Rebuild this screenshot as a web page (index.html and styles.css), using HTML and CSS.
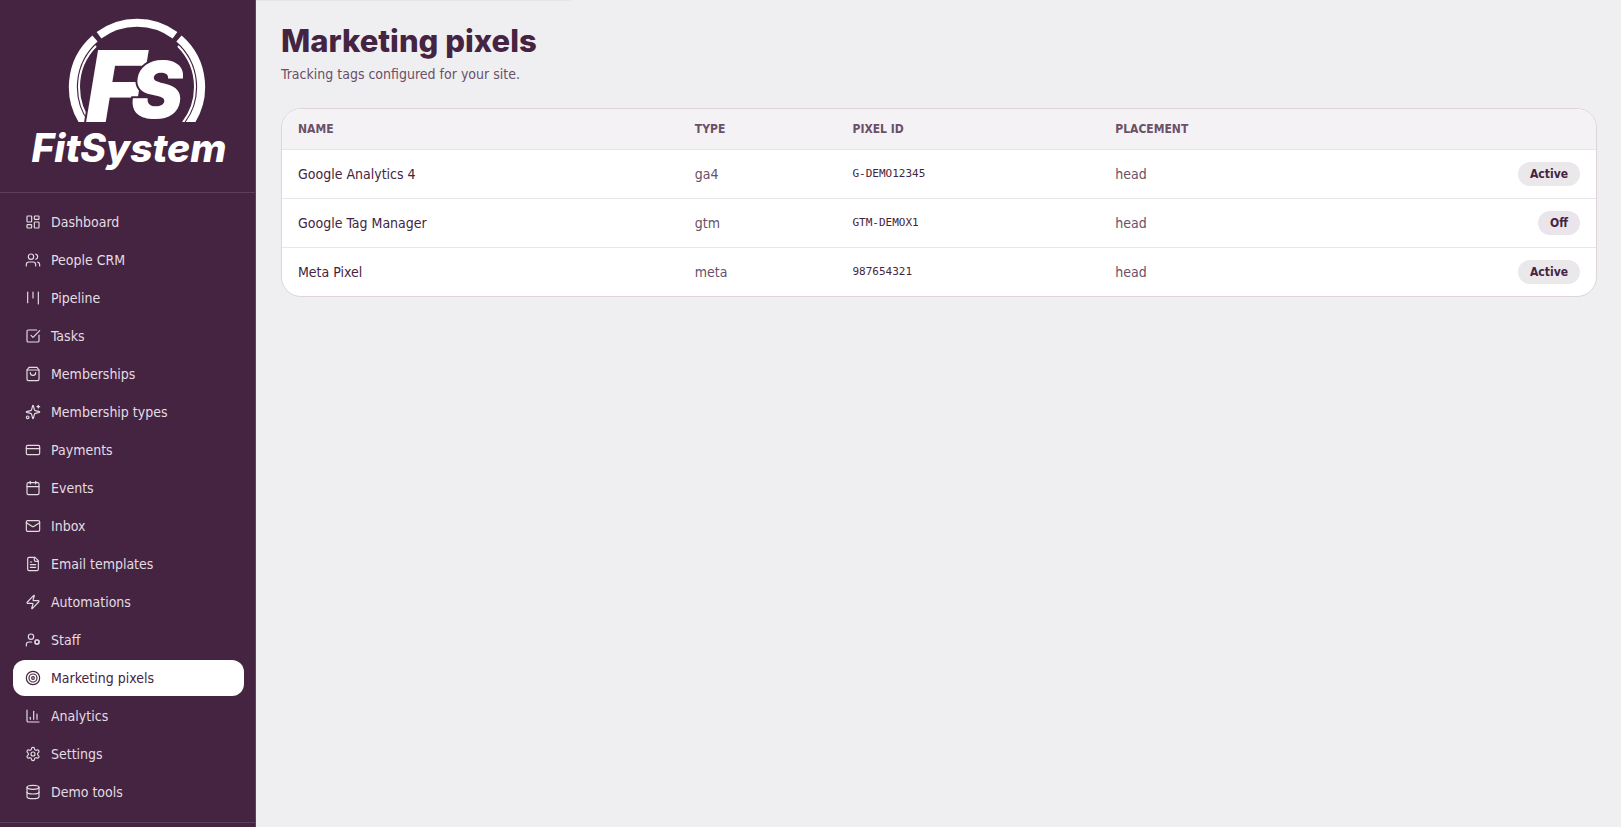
FILE: index.html
```html
<!DOCTYPE html>
<html lang="en">
<head>
    <meta charset="UTF-8">
    <meta name="viewport" content="width=device-width, initial-scale=1.0">
    <title>Marketing pixels - FitSystem</title>
    <link rel="stylesheet" href="styles.css">
</head>
<body>
    <aside class="sidebar">
        <a href="#" class="brand">
            <svg class="logo" viewBox="0 0 200 160" role="img" aria-label="FitSystem">
                <clipPath id="ringClip"><rect x="-70" y="-70" width="140" height="105"/></clipPath>
                <g transform="translate(109 71)">
                    <g class="ring" clip-path="url(#ringClip)">
                        <path d="M-38 -51.8A64 64 0 0 1 38 -51.8"/>
                        <path d="M-42 -48.5A64 64 0 0 0 -50 40"/>
                        <path d="M42 -48.5A64 64 0 0 1 50 40"/>
                        <path class="ring-thin" d="M-41 -41A58 58 0 0 0 -42 40"/>
                        <path class="ring-thin" d="M41 -41A58 58 0 0 1 42 40"/>
                    </g>
                </g>
                <text class="mark" x="58" y="106">F<tspan class="mark-small" x="103" y="102">S</tspan></text>
                <text class="wordmark" x="101" y="146" text-anchor="middle">FitSystem</text>
            </svg>
        </a>
        <nav class="nav">
            <a href="#"><svg class="icon" viewBox="0 0 24 24"><rect x="3" y="3" width="7" height="9" rx="1"/><rect x="14" y="3" width="7" height="5" rx="1"/><rect x="14" y="12" width="7" height="9" rx="1"/><rect x="3" y="16" width="7" height="5" rx="1"/></svg>Dashboard</a>
            <a href="#"><svg class="icon" viewBox="0 0 24 24"><path d="M16 21v-2a4 4 0 0 0-4-4H6a4 4 0 0 0-4 4v2"/><circle cx="9" cy="7" r="4"/><path d="M22 21v-2a4 4 0 0 0-3-3.87"/><path d="M16 3.13a4 4 0 0 1 0 7.75"/></svg>People CRM</a>
            <a href="#"><svg class="icon" viewBox="0 0 24 24"><path d="M4 3v16"/><path d="M12 3v9"/><path d="M20 3v18"/></svg>Pipeline</a>
            <a href="#"><svg class="icon" viewBox="0 0 24 24"><path d="M21 10.5V19a2 2 0 0 1-2 2H5a2 2 0 0 1-2-2V5a2 2 0 0 1 2-2h12.5"/><path d="m9 11 3 3L22 4"/></svg>Tasks</a>
            <a href="#"><svg class="icon" viewBox="0 0 24 24"><path d="M6 2 3 6v14a2 2 0 0 0 2 2h14a2 2 0 0 0 2-2V6l-3-4Z"/><path d="M3 6h18"/><path d="M16 10a4 4 0 0 1-8 0"/></svg>Memberships</a>
            <a href="#"><svg class="icon" viewBox="0 0 24 24"><path d="M9.94 15.5A2 2 0 0 0 8.5 14.06l-6.14-1.58a.5.5 0 0 1 0-.96L8.5 9.94A2 2 0 0 0 9.94 8.5l1.58-6.14a.5.5 0 0 1 .96 0l1.58 6.14a2 2 0 0 0 1.44 1.44l6.14 1.58a.5.5 0 0 1 0 .96l-6.14 1.58a2 2 0 0 0-1.44 1.44l-1.58 6.14a.5.5 0 0 1-.96 0z"/><path d="M20 2v4"/><path d="M22 4h-4"/><circle cx="4" cy="20" r="2"/></svg>Membership types</a>
            <a href="#"><svg class="icon" viewBox="0 0 24 24"><rect x="2" y="5" width="20" height="14" rx="2"/><path d="M2 10h20"/></svg>Payments</a>
            <a href="#"><svg class="icon" viewBox="0 0 24 24"><path d="M8 2v4"/><path d="M16 2v4"/><rect x="3" y="4" width="18" height="18" rx="2"/><path d="M3 10h18"/></svg>Events</a>
            <a href="#"><svg class="icon" viewBox="0 0 24 24"><rect x="2" y="4" width="20" height="16" rx="2"/><path d="m22 7-8.97 5.7a1.94 1.94 0 0 1-2.06 0L2 7"/></svg>Inbox</a>
            <a href="#"><svg class="icon" viewBox="0 0 24 24"><path d="M15 2H6a2 2 0 0 0-2 2v16a2 2 0 0 0 2 2h12a2 2 0 0 0 2-2V7Z"/><path d="M14 2v4a2 2 0 0 0 2 2h4"/><path d="M10 9H8"/><path d="M16 13H8"/><path d="M16 17H8"/></svg>Email templates</a>
            <a href="#"><svg class="icon" viewBox="0 0 24 24"><path d="M4 14a1 1 0 0 1-.78-1.63l9.9-10.2a.5.5 0 0 1 .86.46l-1.92 6.02A1 1 0 0 0 13 10h7a1 1 0 0 1 .78 1.63l-9.9 10.2a.5.5 0 0 1-.86-.46l1.92-6.02A1 1 0 0 0 11 14z"/></svg>Automations</a>
            <a href="#"><svg class="icon" viewBox="0 0 24 24"><circle cx="9" cy="7" r="4"/><path d="M10 15H6a4 4 0 0 0-4 4v2"/><circle cx="18" cy="15" r="3"/><path d="m21.7 16.4-.9-.3"/><path d="m15.2 13.9-.9-.3"/><path d="m16.6 18.7.3-.9"/><path d="m19.1 12.2.3-.9"/><path d="m19.6 18.7-.4-1"/><path d="m16.8 12.3-.4-1"/><path d="m14.3 16.6 1-.4"/><path d="m20.7 13.8 1-.4"/></svg>Staff</a>
            <a href="#" class="active"><svg class="icon" viewBox="0 0 24 24"><circle cx="12" cy="12" r="10"/><circle cx="12" cy="12" r="6"/><circle cx="12" cy="12" r="2"/></svg>Marketing pixels</a>
            <a href="#"><svg class="icon" viewBox="0 0 24 24"><path d="M3 3v16a2 2 0 0 0 2 2h16"/><path d="M8 17v-3"/><path d="M13 17V5"/><path d="M18 17V9"/></svg>Analytics</a>
            <a href="#"><svg class="icon" viewBox="0 0 24 24"><path d="M12.22 2h-.44a2 2 0 0 0-2 2v.18a2 2 0 0 1-1 1.73l-.43.25a2 2 0 0 1-2 0l-.15-.08a2 2 0 0 0-2.73.73l-.22.38a2 2 0 0 0 .73 2.73l.15.1a2 2 0 0 1 1 1.72v.51a2 2 0 0 1-1 1.74l-.15.09a2 2 0 0 0-.73 2.73l.22.38a2 2 0 0 0 2.73.73l.15-.08a2 2 0 0 1 2 0l.43.25a2 2 0 0 1 1 1.73V20a2 2 0 0 0 2 2h.44a2 2 0 0 0 2-2v-.18a2 2 0 0 1 1-1.73l.43-.25a2 2 0 0 1 2 0l.15.08a2 2 0 0 0 2.73-.73l.22-.39a2 2 0 0 0-.73-2.73l-.15-.08a2 2 0 0 1-1-1.74v-.5a2 2 0 0 1 1-1.74l.15-.09a2 2 0 0 0 .73-2.73l-.22-.38a2 2 0 0 0-2.73-.73l-.15.08a2 2 0 0 1-2 0l-.43-.25a2 2 0 0 1-1-1.73V4a2 2 0 0 0-2-2z"/><circle cx="12" cy="12" r="3"/></svg>Settings</a>
            <a href="#"><svg class="icon" viewBox="0 0 24 24"><ellipse cx="12" cy="5" rx="9" ry="3"/><path d="M3 5v14a9 3 0 0 0 18 0V5"/><path d="M3 12a9 3 0 0 0 18 0"/></svg>Demo tools</a>
        </nav>
        <div class="sidebar-footer"></div>
    </aside>
    <main class="main">
        <div class="progress"></div>
        <div class="content">
            <h1>Marketing pixels</h1>
            <p class="subtitle">Tracking tags configured for your site.</p>
            <div class="card">
                <table>
                    <colgroup>
                        <col class="col-name">
                        <col class="col-type">
                        <col class="col-id">
                        <col>
                        <col>
                    </colgroup>
                    <thead>
                        <tr>
                            <th>NAME</th>
                            <th>TYPE</th>
                            <th>PIXEL ID</th>
                            <th>PLACEMENT</th>
                            <th></th>
                        </tr>
                    </thead>
                    <tbody>
                        <tr>
                            <td>Google Analytics 4</td>
                            <td class="muted">ga4</td>
                            <td class="mono">G-DEMO12345</td>
                            <td class="muted">head</td>
                            <td class="status"><span class="badge">Active</span></td>
                        </tr>
                        <tr>
                            <td>Google Tag Manager</td>
                            <td class="muted">gtm</td>
                            <td class="mono">GTM-DEMOX1</td>
                            <td class="muted">head</td>
                            <td class="status"><span class="badge off">Off</span></td>
                        </tr>
                        <tr>
                            <td>Meta Pixel</td>
                            <td class="muted">meta</td>
                            <td class="mono">987654321</td>
                            <td class="muted">head</td>
                            <td class="status"><span class="badge">Active</span></td>
                        </tr>
                    </tbody>
                </table>
            </div>
        </div>
    </main>
</body>
</html>
```

FILE: styles.css
```css
* {
    box-sizing: border-box;
}
body {
    display: flex;
    height: 100vh;
    margin: 0;
    overflow: hidden;
    background: #efeff1;
    color: #452442;
    font-family: "DejaVu Sans Condensed", Tahoma, sans-serif;
    font-size: 14px;
    line-height: 20px;
}
.sidebar {
    display: flex;
    flex-direction: column;
    flex-shrink: 0;
    width: 256px;
    overflow: hidden;
    background: #452442;
    border-right: 1px solid #5f4260;
}
.brand {
    flex-shrink: 0;
    padding: 16px 28px;
    border-bottom: 1px solid #5c3f5a;
}
.logo {
    display: block;
    width: 200px;
    height: 160px;
}
.ring {
    fill: none;
    stroke: #fff;
    stroke-width: 8;
}
.ring-thin {
    stroke-width: 2;
}
.mark {
    font: italic 900 99px Inter, sans-serif;
    fill: #fff;
    stroke: #452442;
    stroke-width: 4;
    paint-order: stroke;
}
.mark-small {
    font-size: 78px;
}
.wordmark {
    font: italic 800 39px Inter, sans-serif;
    fill: #fff;
}
.nav {
    display: flex;
    flex-direction: column;
    flex-shrink: 0;
    gap: 2px;
    padding: 11px 11px 12px 13px;
}
.nav a {
    display: flex;
    align-items: center;
    gap: 10px;
    padding: 8px 12px;
    border-radius: 12px;
    color: #e3dde2;
    text-decoration: none;
}
.nav a:hover {
    background: #553552;
}
.nav a.active {
    background: #fff;
    color: #452442;
}
.icon {
    width: 16px;
    height: 16px;
    flex-shrink: 0;
    fill: none;
    stroke: currentColor;
    stroke-width: 1.75;
    stroke-linecap: round;
    stroke-linejoin: round;
}
.sidebar-footer {
    flex: 1 0 60px;
    border-top: 1px solid #5c3f5a;
}
.main {
    flex: 1;
    min-width: 0;
}
.progress {
    width: 24%;
    max-width: 315px;
    height: 1px;
    background: #e5e4e7;
}
.content {
    padding: 22px 24px 24px 25px;
}
h1 {
    margin: 0 0 5px;
    font: 800 31px/36px Inter, sans-serif;
}
.subtitle {
    margin: 0 0 24px;
    color: #6a5068;
}
.card {
    overflow: hidden;
    background: #fff;
    border: 1px solid #ddd4dc;
    border-radius: 20px;
}
table {
    width: 100%;
    table-layout: fixed;
    border-collapse: separate;
    border-spacing: 0;
}
.col-name {
    width: 30.2%;
}
.col-type {
    width: 12%;
}
.col-id {
    width: 20%;
}
th, td {
    padding: 0 16px;
    text-align: left;
    border-bottom: 1px solid #e9e4e9;
}
th {
    height: 41px;
    background: #f4f2f5;
    color: #6a5068;
    font-size: 12px;
    font-weight: bold;
}
td {
    height: 49px;
}
tbody tr:last-child td {
    height: 48px;
    border-bottom: none;
}
.muted {
    color: #6a5068;
}
.mono {
    font-family: "DejaVu Sans Mono", monospace;
    font-size: 11px;
}
.status {
    text-align: right;
}
.badge {
    display: inline-block;
    padding: 2px 12px;
    border-radius: 12px;
    background: #ebe8eb;
    font-size: 12px;
    font-weight: bold;
}
.off {
    background: #eae5eb;
}
```
